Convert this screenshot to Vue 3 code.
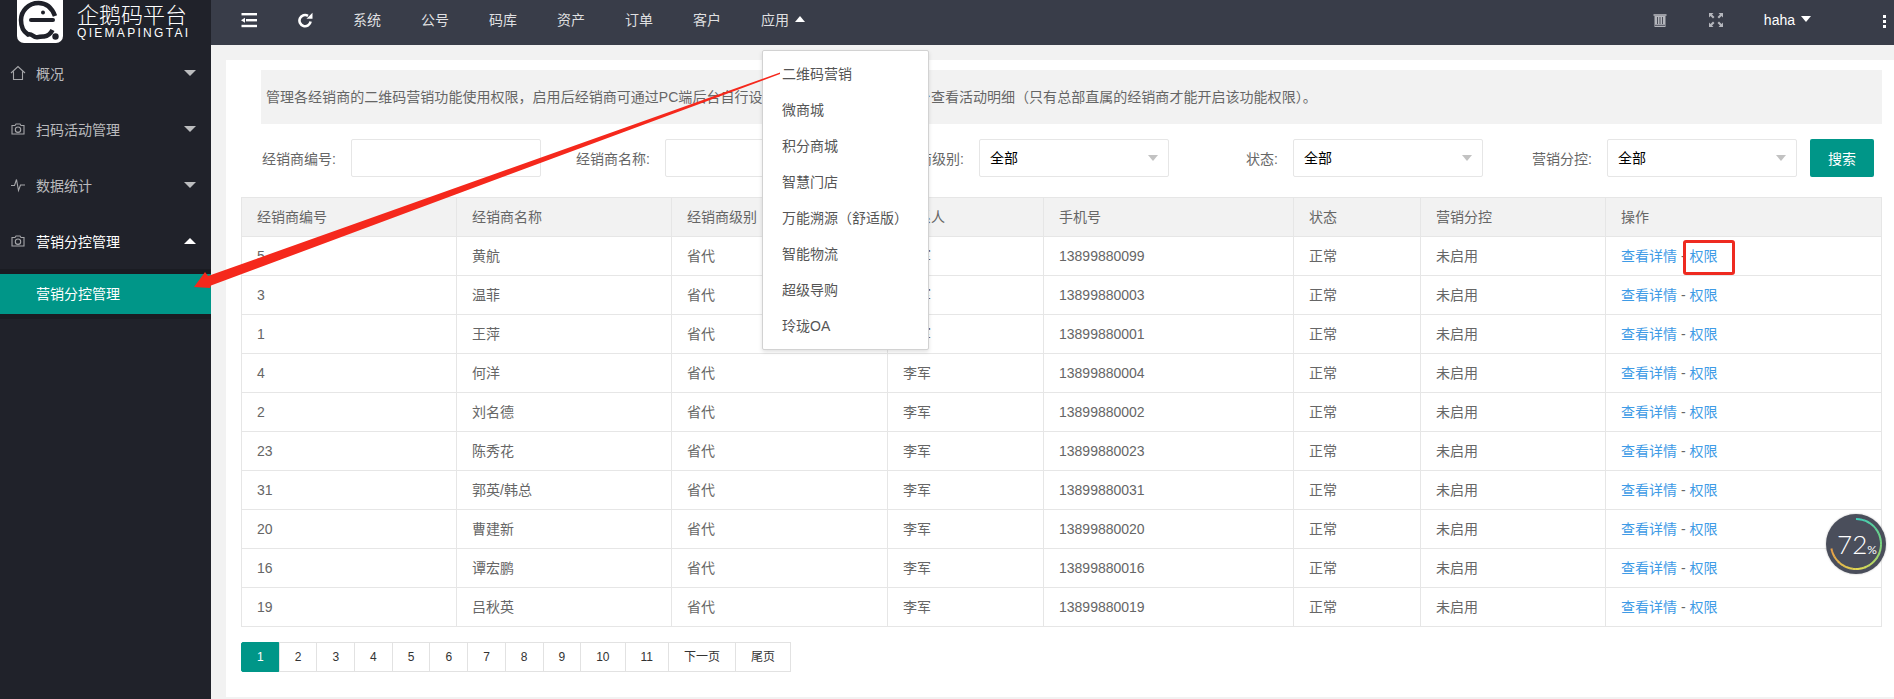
<template>
  <div class="app">
    <aside class="side">
      <div class="logo">
        <div class="logo-mark">
          <svg width="46" height="44" viewBox="0 0 46 44">
            <path class="logo-ring" d="M38 16C35 8 29 3 21.500 3C11.500 3 4 11 4 20C4 27 7 32 11 34.500C14 33.500 16 36 18 36.800C21 38 24 36 27 36.500C31 36 34 33 35.500 30" />
            <rect x="12" y="18" width="26" height="4" rx="2" fill="#1f2129" />
            <circle cx="26" cy="12.500" r="2" fill="#1f2129" />
            <circle cx="38.500" cy="36.500" r="3.200" fill="#1f2129" />
          </svg>
        </div>
        <div class="logo-text">
          <div class="logo-cn">企鹅码平台</div>
          <div class="logo-en">QIEMAPINGTAI</div>
        </div>
      </div>

      <div class="menu">
        <div v-for="item in menu" :key="item.name" class="menu-item" :class="{ open: item.open }">
          <svg v-if="item.icon === 'home'" class="menu-icon" width="16" height="16" viewBox="0 0 16 16">
            <path d="M1 8L8 1.500L15 8M3.500 6.500V14.500H12.500V6.500" />
          </svg>
          <svg v-else-if="item.icon === 'camera'" class="menu-icon" width="16" height="16" viewBox="0 0 16 16">
            <path d="M2 4.500H5L6 3H10L11 4.500H14V13H2Z" />
            <circle cx="8" cy="8.700" r="2.700" />
          </svg>
          <svg v-else class="menu-icon" width="16" height="16" viewBox="0 0 16 16">
            <path d="M1 8.500H4.500L6.500 2.500L8.500 13.500L10.500 8H15" />
          </svg>
          <span>{{ item.name }}</span>
          <i class="menu-caret"></i>
        </div>
        <div class="menu-child">
          <div class="menu-child-item">营销分控管理</div>
        </div>
      </div>
    </aside>

    <div class="main">
      <header class="top">
        <nav class="nav">
          <div class="nav-item icon">
            <svg width="16" height="16" viewBox="0 0 16 16">
              <rect x="0.500" y="1" width="15.500" height="2.400" fill="#fff" />
              <rect x="5" y="7" width="11" height="2.400" fill="#fff" />
              <path d="M0 8.200L4 5.700V10.700Z" fill="#fff" />
              <rect x="0.500" y="12.800" width="15.500" height="2.400" fill="#fff" />
            </svg>
          </div>
          <div class="nav-item icon">
            <svg width="16" height="16" viewBox="0 0 16 16">
              <path d="M13.600 9.500A5.600 5.600 0 1 1 11 3.800" fill="none" stroke="#fff" stroke-width="2.600" />
              <path d="M9.500 6.800H15.500V0.800Z" fill="#fff" />
            </svg>
          </div>
          <div v-for="name in navs" :key="name" class="nav-item">{{ name }}</div>
          <div class="nav-item apps">
            应用<i class="caret-up"></i>
            <div class="drop">
              <div v-for="name in apps" :key="name" class="drop-item">{{ name }}</div>
            </div>
          </div>
        </nav>
        <div class="nav right">
          <div class="nav-item icon">
            <svg width="16" height="16" viewBox="0 0 16 16">
              <path d="M1.500 3H14.500" stroke="#b4b6bc" stroke-width="1.600" />
              <path d="M2.500 4H13.500V15H2.500Z" fill="#b4b6bc" />
              <path d="M5.500 5V12M8 5V12M10.500 5V12" stroke="#4b4e59" stroke-width="1" />
              <path d="M3 13.300H13" stroke="#4b4e59" stroke-width="1" />
            </svg>
          </div>
          <div class="nav-item icon">
            <svg width="16" height="16" viewBox="0 0 16 16" class="expand">
              <path d="M1 5.500V1H5.500L4 2.500L6.500 5L5 6.500L2.500 4Z" />
              <path d="M15 5.500V1H10.500L12 2.500L9.500 5L11 6.500L13.500 4Z" />
              <path d="M1 10.500V15H5.500L4 13.500L6.500 11L5 9.500L2.500 12Z" />
              <path d="M15 10.500V15H10.500L12 13.500L9.500 11L11 9.500L13.500 12Z" />
            </svg>
          </div>
          <div class="nav-item user">haha<i class="caret-down"></i></div>
          <div class="dots"><i></i><i></i><i></i></div>
        </div>
      </header>

      <section class="body">
        <div class="card">
          <div class="tip">
            管理各经销商的二维码营销功能使用权限，启用后经销商可通过PC端后台自行设置营销活动规则，总部后台查看活动明细（只有总部直属的经销商才能开启该功能权限）。
          </div>

          <div class="form">
            <div v-for="field in fields" :key="field.label" class="field">
              <label>{{ field.label }}:</label>
              <div v-if="field.select" class="select">全部<i></i></div>
              <div v-else class="input"></div>
            </div>
            <button class="btn">搜索</button>
          </div>

          <table class="table">
            <colgroup>
              <col v-for="w in colWidths" :key="w.id" :style="{ width: w.px + 'px' }" />
            </colgroup>
            <thead>
              <tr>
                <th v-for="h in heads" :key="h">{{ h }}</th>
              </tr>
            </thead>
            <tbody>
              <tr v-for="(row, i) in rows" :key="row.id">
                <td>{{ row.id }}</td>
                <td>{{ row.name }}</td>
                <td>省代</td>
                <td>李军</td>
                <td>{{ row.phone }}</td>
                <td>正常</td>
                <td>未启用</td>
                <td>
                  <a class="link">查看详情</a> - <a class="link" :class="{ marked: i === 0 }">权限</a>
                </td>
              </tr>
            </tbody>
          </table>

          <div class="pager">
            <a v-for="(p, i) in pages" :key="p" :class="{ curr: i === 0 }">{{ p }}</a>
          </div>
        </div>
      </section>
    </div>

    <!-- annotation arrow drawn over the screenshot -->
    <svg class="arrow" width="1894" height="699" viewBox="0 0 1894 699">
      <path d="M194 287L205 272L208 276L780 72.500V74L211 285.500L210 288Z" fill="#f5281c" />
    </svg>

    <div class="gauge">
      <svg width="60" height="60" viewBox="0 0 60 60">
        <path v-for="s in arcs" :key="s.d" :d="s.d" :stroke="s.color" fill="none" stroke-width="2" />
      </svg>
      <div class="gauge-text">72<small>%</small></div>
    </div>
  </div>
</template>

<script setup>
const menu = [
  { name: '概况', icon: 'home' },
  { name: '扫码活动管理', icon: 'camera' },
  { name: '数据统计', icon: 'pulse' },
  { name: '营销分控管理', icon: 'camera', open: true }
]

const navs = ['系统', '公号', '码库', '资产', '订单', '客户']
const apps = ['二维码营销', '微商城', '积分商城', '智慧门店', '万能溯源（舒适版）', '智能物流', '超级导购', '玲珑OA']

const fields = [
  { label: '经销商编号' },
  { label: '经销商名称' },
  { label: '经销商级别', select: true },
  { label: '状态', select: true },
  { label: '营销分控', select: true }
]

const heads = ['经销商编号', '经销商名称', '经销商级别', '联系人', '手机号', '状态', '营销分控', '操作']
const colWidths = [215, 215, 216, 156, 250, 127, 185, 276].map((px, id) => ({ id, px }))

const rows = [
  { id: 5, name: '黄航', phone: '13899880099' },
  { id: 3, name: '温菲', phone: '13899880003' },
  { id: 1, name: '王萍', phone: '13899880001' },
  { id: 4, name: '何洋', phone: '13899880004' },
  { id: 2, name: '刘名德', phone: '13899880002' },
  { id: 23, name: '陈秀花', phone: '13899880023' },
  { id: 31, name: '郭英/韩总', phone: '13899880031' },
  { id: 20, name: '曹建新', phone: '13899880020' },
  { id: 16, name: '谭宏鹏', phone: '13899880016' },
  { id: 19, name: '吕秋英', phone: '13899880019' }
]

const pages = ['1', '2', '3', '4', '5', '6', '7', '8', '9', '10', '11', '下一页', '尾页']

// gauge ring: short arc pieces so the colour can run teal -> yellow -> orange
const stops = [[64, 206, 184], [120, 214, 130], [224, 218, 84], [232, 160, 72]]
const colorAt = (t) => {
  const pos = t * (stops.length - 1)
  const n = Math.min(Math.floor(pos), stops.length - 2)
  const f = pos - n
  const c = stops[n].map((v, k) => Math.round(v + (stops[n + 1][k] - v) * f))
  return `rgb(${c.join(',')})`
}
const point = (deg) => {
  const a = (deg * Math.PI) / 180
  return `${(30 + 25 * Math.sin(a)).toFixed(2)} ${(30 - 25 * Math.cos(a)).toFixed(2)}`
}
const arcs = Array.from({ length: 40 }, (_, i) => ({
  d: `M${point((i * 259) / 40)}A25 25 0 0 1 ${point(((i + 1.1) * 259) / 40)}`,
  color: colorAt(i / 39)
}))
</script>

<style scoped>
.app {
  position: relative;
  display: grid;
  grid-template-columns: 211px 1fr;
  height: 699px;
  overflow: hidden;
  font-family: "Liberation Sans", "Noto Sans CJK SC", sans-serif;
  font-size: 14px;
  color: #666;
}

.side {
  background: #20222a;
  color: rgba(255, 255, 255, 0.7);
}

.logo {
  display: flex;
  height: 45px;
  padding-left: 17px;
}

.logo-mark {
  width: 46px;
  height: 43px;
  background: #fff;
  border-radius: 0 0 7px 7px;
}

.logo-ring {
  fill: none;
  stroke: #1f2129;
  stroke-width: 4.500;
}

.logo-text {
  margin-left: 14px;
  color: #fff;
}

.logo-cn {
  font-size: 22px;
  line-height: 24px;
  margin-top: 4px;
  font-weight: 300;
}

.logo-en {
  font-size: 12px;
  line-height: 11px;
  letter-spacing: 2.300px;
  white-space: nowrap;
}

.menu-item {
  position: relative;
  display: flex;
  align-items: center;
  height: 56px;
  padding-left: 10px;
}

.menu-item.open {
  color: #fff;
}

.menu-icon {
  margin-right: 10px;
  fill: none;
  stroke: rgba(255, 255, 255, 0.6);
  stroke-width: 1.100;
}

.menu-caret {
  position: absolute;
  right: 15px;
  top: 25px;
  border-style: solid;
  border-width: 6px 6px 0;
  border-color: rgba(255, 255, 255, 0.7) transparent transparent;
}

.open .menu-caret {
  top: 25px;
  border-width: 0 6px 6px;
  border-color: transparent transparent #fff;
}

.menu-child {
  padding: 5px 0;
  background: #1a1c22;
}

.menu-child-item {
  height: 40px;
  line-height: 40px;
  padding-left: 36px;
  background: #009688;
  color: #fff;
}

.main {
  display: flex;
  flex-direction: column;
  background: #f2f2f2;
}

.top {
  display: flex;
  justify-content: space-between;
  height: 45px;
  padding-left: 10px;
  background: #393d49;
}

.nav {
  display: flex;
}

.nav-item {
  position: relative;
  height: 40px;
  line-height: 40px;
  padding: 0 20px;
  color: rgba(255, 255, 255, 0.85);
}

.nav-item.icon {
  display: flex;
  align-items: center;
}

.caret-up,
.caret-down {
  display: inline-block;
  margin-left: 6px;
  vertical-align: 3px;
  border-style: solid;
}

.caret-up {
  border-width: 0 5.500px 6px;
  border-color: transparent transparent #fff;
}

.caret-down {
  border-width: 6px 5.500px 0;
  border-color: #fff transparent transparent;
}

.drop {
  position: absolute;
  top: 50px;
  left: 21px;
  z-index: 5;
  width: 167px;
  padding: 5px 0;
  box-sizing: border-box;
  background: #fff;
  border: 1px solid #d2d2d2;
  border-radius: 2px;
  box-shadow: 0 2px 4px rgba(0, 0, 0, 0.12);
}

.drop-item {
  height: 36px;
  line-height: 36px;
  padding-left: 19px;
  color: #555;
  white-space: nowrap;
}

.right {
  align-items: flex-start;
}

.expand {
  fill: #b4b6bc;
}

.user {
  color: #fff;
}

.dots {
  display: flex;
  flex-direction: column;
  gap: 2px;
  width: 64px;
  height: 40px;
  padding: 15px 0 0 52px;
  box-sizing: border-box;
}

.dots i {
  width: 3px;
  height: 3px;
  background: #fff;
}

.body {
  flex: 1;
  display: flex;
  padding: 15px 0 2px 15px;
}

.card {
  flex: 1;
  padding: 10px 13px 0 1px;
  background: #fff;
}

.tip {
  height: 54px;
  line-height: 54px;
  margin-left: 34px;
  padding-left: 5px;
  background: #f2f2f2;
  letter-spacing: 0.030px;
  white-space: nowrap;
  overflow: hidden;
}

.form {
  display: flex;
  margin-top: 15px;
}

.field {
  display: flex;
  align-items: center;
  width: 314px;
}

.field label {
  width: 109px;
  margin-right: 15px;
  text-align: right;
}

.input,
.select {
  position: relative;
  width: 190px;
  height: 38px;
  box-sizing: border-box;
  border: 1px solid #e6e6e6;
  border-radius: 2px;
  background: #fff;
}

.select {
  line-height: 36px;
  padding-left: 10px;
  color: #000;
}

.select i {
  position: absolute;
  right: 10px;
  top: 15px;
  border-style: solid;
  border-width: 6px 5px 0;
  border-color: #c2c2c2 transparent transparent;
}

.btn {
  width: 64px;
  height: 38px;
  margin-left: 13px;
  padding: 0;
  border: 0;
  border-radius: 2px;
  background: #009688;
  color: #fff;
  font: inherit;
}

.table {
  width: 1640px;
  margin: 20px 0 0 14px;
  border-collapse: collapse;
  table-layout: fixed;
}

.table th,
.table td {
  padding: 9px 15px;
  line-height: 20px;
  border: 1px solid #e6e6e6;
  text-align: left;
  font-weight: 400;
  color: #666;
}

.table th {
  background: #f2f2f2;
}

.link {
  position: relative;
  color: #3e9be6;
}

.marked::after {
  content: "";
  position: absolute;
  top: -8px;
  left: -6px;
  width: 46px;
  height: 29px;
  border: 3px solid #ee2a20;
  border-radius: 3px;
}

.pager {
  display: flex;
  margin: 15px 0 0 14px;
}

.pager a {
  height: 28px;
  line-height: 28px;
  padding: 0 15px;
  margin-right: -1px;
  border: 1px solid #e2e2e2;
  font-size: 12px;
  color: #333;
  background: #fff;
}

.pager a.curr {
  border-color: #009688;
  border-radius: 2px;
  background: #009688;
  color: #fff;
}

.arrow {
  position: absolute;
  top: 0;
  left: 0;
  z-index: 8;
  pointer-events: none;
}

.gauge {
  position: absolute;
  top: 514px;
  left: 1826px;
  z-index: 6;
  display: flex;
  align-items: center;
  justify-content: center;
  width: 60px;
  height: 60px;
  border-radius: 50%;
  background: #4a4e5b;
  box-shadow: 0 0 2px rgba(0, 0, 0, 0.3);
}

.gauge svg {
  position: absolute;
  top: 0;
  left: 0;
}

.gauge-text {
  margin-left: 2px;
  font-family: Lato, "Liberation Sans", sans-serif;
  font-size: 26px;
  font-weight: 300;
  color: #fff;
}

.gauge-text small {
  font-size: 12px;
  font-weight: 400;
}
</style>

<style>
html,
body {
  margin: 0;
}
</style>
